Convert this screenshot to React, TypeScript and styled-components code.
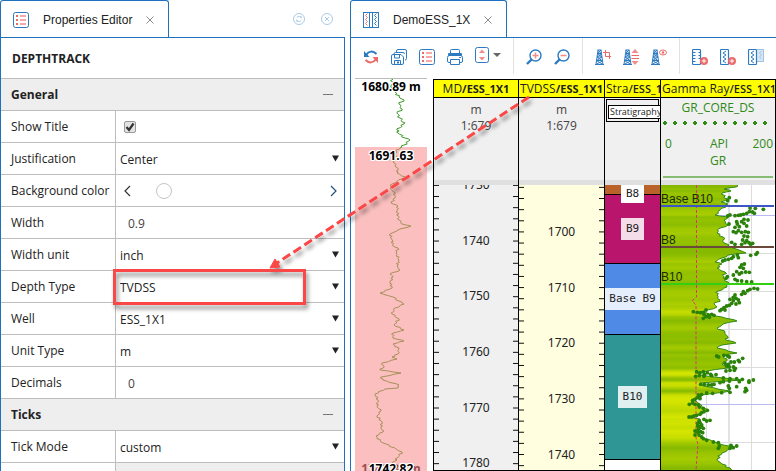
import React from "react";
import styled, { createGlobalStyle } from "styled-components";

const BLUE = "#1f70bd";
const ICON = "#2b7ac2";
const PINK = "#f08c8c";
const RED = "#fa4646";
const UI = '"Open Sans", "Noto Sans", sans-serif';
const ARIAL = '"Liberation Sans", Arial, sans-serif';

const GlobalStyle = createGlobalStyle`
  * { box-sizing: border-box; }
  body { margin: 0; background: #fff; color: #222; font: 12px/16px ${UI}; overflow: hidden; }
  button, input, select { font: inherit; color: inherit; }
  h1, h2 { margin: 0; }
`;

const Page = styled.div`
  position: relative;
  display: flex;
  gap: 5px;
  height: 100vh;
  overflow: hidden;
`;
const Panel = styled.section<{ $side?: boolean }>`
  display: flex;
  flex-direction: column;
  flex: ${(p) => (p.$side ? "0 0 345px" : "1 1 0")};
  min-width: 0;
`;
const TabBar = styled.header`
  display: flex;
  align-items: stretch;
  height: 38px;
  flex: none;
  border-bottom: 1px solid ${BLUE};
`;
const Tab = styled.div`
  display: flex;
  align-items: center;
  gap: 14px;
  padding: 2px 14px 0 12px;
  border: 1px solid ${BLUE};
  border-bottom: 0;
  border-radius: 3px 3px 0 0;
  white-space: nowrap;
`;
const TabLabel = styled.h1`
  font: 12px/16px ${ARIAL};
`;
const IconButton = styled.button<{ $w?: number }>`
  display: flex;
  align-items: center;
  justify-content: center;
  flex: none;
  width: ${(p) => p.$w ?? 28}px;
  padding: 0;
  border: 0;
  background: none;
  cursor: pointer;
`;
const TabTools = styled.div`
  display: flex;
  margin-left: auto;
  padding-right: 4px;
`;
const PanelBody = styled.div<{ $right?: boolean }>`
  flex: 1;
  min-height: 0;
  overflow: hidden;
  border-left: 1px solid ${BLUE};
  border-right: ${(p) => (p.$right ? `1px solid ${BLUE}` : "0")};
`;
const ObjectTitle = styled.h2`
  height: 41px;
  padding: 0 11px;
  font: 700 12px/41px ${UI};
  border-bottom: 1px solid #bdbdbd;
`;
const SectionHead = styled.div`
  display: flex;
  align-items: center;
  justify-content: space-between;
  height: 32px;
  padding: 0 4px 0 10px;
  background: #eee;
  border-bottom: 1px solid #bdbdbd;
`;
const SectionTitle = styled.h2`
  font: 700 12px/16px ${UI};
`;
const PropRow = styled.div`
  display: grid;
  grid-template-columns: 115px 1fr;
  height: 32px;
  border-bottom: 1px solid #bdbdbd;
`;
const PropLabel = styled.label`
  padding: 0 0 0 10px;
  line-height: 31px;
  border-right: 1px solid #bdbdbd;
  white-space: nowrap;
`;
const PropValue = styled.div<{ $muted?: boolean }>`
  display: grid;
  align-items: center;
  background: ${(p) => (p.$muted ? "#eee" : "#fff")};
  > * { grid-area: 1 / 1; }
`;
const Select = styled.select`
  appearance: none;
  width: 100%;
  height: 31px;
  padding: 2px 20px 0 4px;
  border: 0;
  background: transparent;
`;
const Caret = styled.svg`
  justify-self: end;
  margin-right: 5px;
  pointer-events: none;
`;
const NumberBox = styled.input`
  width: 100%;
  height: 31px;
  padding: 1px 12px 0 12px;
  border: 0;
  background: transparent;
  color: #444;
`;
const CheckFrame = styled.span`
  display: grid;
  width: 12px;
  height: 12px;
  margin-left: 8px;
  > * { grid-area: 1 / 1; }
  svg { pointer-events: none; }
`;
const CheckBox = styled.input`
  appearance: none;
  margin: 0;
  border: 1px solid #999;
  border-radius: 2px;
  background: #e3e3e3;
`;
const ColorPicker = styled.div`
  display: flex;
  align-items: center;
  padding: 0 4px 0 3px;
`;
const Swatch = styled.button`
  width: 16px;
  height: 16px;
  margin: 0 auto 0 21px;
  padding: 0;
  border: 1px solid #c4c4c4;
  border-radius: 50%;
  background: #fff;
`;

const Toolbar = styled.div`
  display: flex;
  height: 40px;
  padding: 0 6px 2px;
`;
const Separator = styled.span`
  flex: none;
  width: 1px;
  margin: 0 6px 2px;
  background: #e2e2e2;
`;
const LogView = styled.div`
  display: flex;
  gap: 6px;
  padding-left: 4px;
`;
const Overview = styled.div`
  position: relative;
  flex: none;
  width: 72px;
  height: 393px;
  border-top: 1px solid #bbb;
  overflow: hidden;
  svg { display: block; }
`;
const DepthMark = styled.span<{ $top: number; $faded?: boolean }>`
  position: absolute;
  top: ${(p) => p.$top}px;
  left: 0;
  right: 0;
  text-align: center;
  white-space: nowrap;
  font: 700 12px/16px "Noto Sans", sans-serif;
  color: ${(p) => (p.$faded ? "#9b5050" : "#000")};
  text-shadow: ${(p) =>
    p.$faded
      ? "none"
      : "1px 0 #fff, -1px 0 #fff, 0 1px #fff, 0 -1px #fff, 1px 1px #fff, -1px -1px #fff, 1px -1px #fff, -1px 1px #fff"};
`;
const Tracks = styled.div`
  display: grid;
  grid-template-columns: 84px 86px 56px minmax(0, 1fr);
  flex: 1;
  min-width: 0;
  margin-top: 1px;
  border: 1px solid #000;
`;
const Track = styled.div`
  display: flex;
  flex-direction: column;
  min-width: 0;
  overflow: hidden;
  & + & { border-left: 1px solid #000; }
`;
const TrackTitle = styled.div<{ $left?: boolean }>`
  height: 18px;
  padding: 0 1px;
  border-bottom: 1px solid #000;
  background: #ff0;
  font: 12px/17px ${UI};
  text-align: ${(p) => (p.$left ? "left" : "center")};
  white-space: nowrap;
  overflow: hidden;
`;
const Bold = styled.b<{ $light?: boolean }>`
  font-weight: ${(p) => (p.$light ? 600 : 700)};
  font-size: 11px;
`;
const TrackHead = styled.div`
  height: 87px;
  background: #f0f0f0;
  border-bottom: 5px solid #e0e0e0;
  overflow: hidden;
`;
const ScaleInfo = styled.div`
  padding-top: 4px;
  text-align: center;
  line-height: 16px;
  color: #444;
`;
const TrackBody = styled.div<{ $bg: string }>`
  position: relative;
  height: 285px;
  background: ${(p) => p.$bg};
  overflow: hidden;
  > svg { display: block; }
`;
const StratBox = styled.div`
  width: 53px;
  height: 23px;
  margin: 1px 0 0 1px;
  padding: 5px 0 0 1px;
  border: 1px solid #000;
`;
const StratName = styled.div`
  width: 60px;
  height: 14px;
  padding-left: 1px;
  border: 1px solid #000;
  background: #fff;
  font: 9px/12px ${UI};
`;
const CurveHead = styled.div`
  padding: 1px 2px;
  text-align: center;
  color: #2f8a16;
  line-height: 17px;
`;
const CurveRange = styled.div`
  display: grid;
  grid-template-columns: 1fr 1fr 1fr;
  padding: 10px 0 0 2px;
  span:first-child { text-align: left; }
  span:last-child { text-align: right; }
`;
const DotRule = styled.div`
  height: 4px;
  margin-top: 5px;
  background: radial-gradient(circle at 2px 2px, #2f8a16 0 1px, #2f8a16 2px, transparent 2px) 0 0 / 10px 4px repeat-x;
`;
const SolidRule = styled.div`
  height: 2px;
  margin-top: 7px;
  background: #86bd72;
`;
const Layer = styled.div<{ $h: number; $color: string }>`
  display: flex;
  align-items: center;
  justify-content: center;
  height: ${(p) => p.$h}px;
  background: ${(p) => p.$color};
  & + & { border-top: 1px solid #000; }
`;
const LayerName = styled.span<{ $wide?: boolean; $top?: boolean }>`
  position: relative;
  z-index: 1;
  width: ${(p) => (p.$wide ? "100%" : "auto")};
  align-self: ${(p) => (p.$top ? "flex-start" : "center")};
  flex: none;
  padding: ${(p) => (p.$top ? 1 : 3)}px ${(p) => (p.$wide ? 0 : 5)}px;
  background: ${(p) => (p.$top ? "#fff" : "rgba(255, 255, 255, 0.85)")};
  font: 11px/16px "DejaVu Sans Mono", monospace;
  text-align: center;
  white-space: nowrap;
`;
const Marker = styled.div<{ $top: number; $color: string }>`
  position: absolute;
  top: ${(p) => p.$top}px;
  left: 0;
  right: 1px;
  height: 15px;
  border-bottom: 2px solid ${(p) => p.$color};
  font: 12px/14px ${ARIAL};
  color: #1c2b00;
`;
const Annotation = styled.svg`
  position: absolute;
  left: 0;
  top: 0;
  pointer-events: none;
`;

/* ---------- icons ---------- */

const ListIcon = () => (
  <svg width="16" height="16" viewBox="0 0 16 16">
    <rect x="0.5" y="0.5" width="15" height="15" rx="2" fill="#fff" stroke={ICON} />
    <path d="M3 4h2M3 8h2M3 12h2" stroke="#ec6a6a" strokeWidth="2" />
    <path d="M7 4h6M7 8h6M7 12h6" stroke="#f5aaaa" strokeWidth="2" />
  </svg>
);
const CloseIcon = () => (
  <svg width="8" height="8" viewBox="0 0 8 8">
    <path d="M0.5 0.5l7 7M7.5 0.5l-7 7" stroke="#8a8a8a" fill="none" />
  </svg>
);
const LogIcon = () => (
  <svg width="16" height="16" viewBox="0 0 16 16" fill="none">
    <rect x="0.5" y="0.5" width="15" height="15" stroke={ICON} />
    <path d="M6.5 0v16M9.5 0v16" stroke={ICON} />
    <path d="M4.500 1.500l-2 2 2 2-2 2 2 2-2 2 2 2" stroke="#ee7777" />
    <path d="M13.500 1.500l-2 2 2 2-2 2 2 2-2 2 2 2" stroke={ICON} />
  </svg>
);
const ReloadTabIcon = () => (
  <svg width="12" height="12" viewBox="0 0 12 12" fill="none" stroke="#a9cbe9">
    <circle cx="6" cy="6" r="5.500" />
    <path d="M3.500 6.500a2.500 2.500 0 0 0 4.500 1M8.500 5.500a2.500 2.500 0 0 0-4.500-1M8 3v2M4 7v2" />
  </svg>
);
const CloseTabIcon = () => (
  <svg width="12" height="12" viewBox="0 0 12 12" fill="none" stroke="#a9cbe9">
    <circle cx="6" cy="6" r="5.500" />
    <path d="M4 4l4 4M8 4l-4 4" />
  </svg>
);
const RefreshIcon = () => (
  <svg width="16" height="16" viewBox="0 0 16 16" fill="none">
    <path d="M3.500 5.500C5.500 2 10 1.500 13.500 5" stroke={ICON} strokeWidth="2" />
    <path d="M1 2v6h5.500z" fill={ICON} />
    <path d="M12.500 10.500C10.500 14 6 14.500 2.500 11" stroke="#ec6a6a" strokeWidth="2" />
    <path d="M15 14V8H9.500z" fill="#ec6a6a" />
  </svg>
);
const SaveAllIcon = () => (
  <svg width="16" height="16" viewBox="0 0 16 16" fill="none" stroke={ICON}>
    <path d="M5.500 3V2a1.500 1.500 0 0 1 1.500-1.500h7A1.500 1.500 0 0 1 15.500 2v7.500a1.500 1.500 0 0 1-1.500 1.500M3 5.500V5a1.500 1.500 0 0 1 1.500-1.500h7.500A1.500 1.500 0 0 1 13.500 5" />
    <path d="M0.500 7A1.500 1.500 0 0 1 2 5.500h8l2.500 2.500v6A1.500 1.500 0 0 1 11 15.500H2A1.500 1.500 0 0 1 0.500 14z" fill="#fff" />
    <path d="M3.500 6v3h5V6M3.500 15v-3.500h6V15" />
    <path d="M6 12.500h2v2H6z" fill={ICON} stroke="none" />
  </svg>
);
const PrintIcon = () => (
  <svg width="16" height="16" viewBox="0 0 16 16" fill="none" stroke={ICON}>
    <path d="M3.500 4V1.500a1 1 0 0 1 1-1h7a1 1 0 0 1 1 1V4" />
    <rect x="1" y="4" width="14" height="3" rx="1" fill={ICON} stroke="none" />
    <path d="M3.500 13.500H2A1.500 1.500 0 0 1 .5 12V8.500A2 2 0 0 1 2.500 6.500h11a2 2 0 0 1 2 2V12a1.500 1.500 0 0 1-1.500 1.500h-1.500" />
    <path d="M3.500 10.500h9v5h-9z" fill="#fff" />
    <path d="M12 8.500h2" />
  </svg>
);
const FitIcon = () => (
  <svg width="26" height="20" viewBox="0 0 26 20">
    <rect x="0.500" y="0.500" width="13" height="15" rx="2" fill="#fff" stroke={ICON} />
    <path d="M7 2.500L10 6H4zM7 13.500L10 10H4z" fill={PINK} />
    <path d="M18 6h8l-4 4z" fill="#666" />
  </svg>
);
const MagnifierIcon = ({ plus }: { plus?: boolean }) => (
  <svg width="16" height="16" viewBox="0 0 16 16" fill="none">
    <circle cx="9.500" cy="6.500" r="5.500" stroke={ICON} strokeWidth="1.400" />
    <path d="M5.500 10.500L1 15" stroke={ICON} strokeWidth="2.400" />
    <path d={plus ? "M6.500 6.500h6M9.500 3.500v6" : "M6.500 6.500h6"} stroke={PINK} strokeWidth="1.500" />
  </svg>
);
const DerrickIcon = ({ kind }: { kind: "crop" | "range" | "eye" }) => (
  <svg width="16" height="16" viewBox="0 0 16 16" fill="none">
    <path d="M2.500 1h4M3 1L1 15.500M6 1l2 14.500M2.500 4.500h4M2 8h5M1.500 11.500h6M0 15.500h9" stroke={ICON} />
    <path d="M3 1l3.500 4L2 8l5.500 4-6.500 3.500M6 1L2.500 4.500 7 8l-5.500 3.500L8 15.500" stroke={ICON} />
    {kind === "crop" && <path d="M10.500 1v6.500H16M8 3.500h6.500V10" stroke="#e86a6a" />}
    {kind === "range" && (
      <>
        <path d="M12 0l3.500 4h-7zM12 16l3.500-4h-7z" fill={PINK} />
        <path d="M8.500 6.500H16M8.500 9.500H16" stroke="#e86a6a" />
      </>
    )}
    {kind === "eye" && (
      <>
        <ellipse cx="12" cy="3.500" rx="3.500" ry="2.500" stroke="#e86a6a" />
        <circle cx="12" cy="3.500" r="1.200" fill="#e86a6a" />
      </>
    )}
  </svg>
);
const AddTrackIcon = ({ wave }: { wave?: boolean }) => (
  <svg width="16" height="16" viewBox="0 0 16 16" fill="none">
    <rect x="0.500" y="0.500" width="8" height="15" rx="1" stroke={ICON} strokeWidth="1.200" />
    {wave ? (
      <path d="M6 2L3 4l3 2-3 2 3 2-3 2 3 2" stroke={ICON} />
    ) : (
      <path d="M1 3.500h2.500M1 6.500h2.500M1 9.500h2.500M1 12.500h2.500M6.500 3.500H8M6.500 6.500H8M6.500 9.500H8" stroke={ICON} />
    )}
    <circle cx="12" cy="12" r="4" fill="#ec6a6a" />
    <path d="M9.800 12h4.400M12 9.800v4.400" stroke="#fff" />
  </svg>
);
const CopyTrackIcon = () => (
  <svg width="16" height="16" viewBox="0 0 16 16" fill="none">
    <path d="M9 0h7v13H9z" fill="#dbe8f4" />
    <path d="M9 .5h6.500v12H9M13.500 2l-2 2 2 2-2 2 2 2" stroke="#9fc2e2" />
    <rect x="0.500" y="0.500" width="8" height="15" rx="1" fill="#fff" stroke={ICON} strokeWidth="1.200" />
    <path d="M6 2L3 4l3 2-3 2 3 2-3 2 3 2" stroke={ICON} />
  </svg>
);
const Chevron = ({ d, color }: { d: string; color: string }) => (
  <svg width="7" height="12" viewBox="0 0 7 12" fill="none">
    <path d={d} stroke={color} strokeWidth="1.200" />
  </svg>
);

/* ---------- log data ---------- */

type Pt = [number, number];

/* Deterministic small-scale roughness between the key samples of a curve. */
const roughen = (pts: Pt[], amp: number, step: number): Pt[] => {
  const out: Pt[] = [];
  let n = 0;
  pts.forEach((p, i) => {
    out.push(p);
    const q = pts[i + 1];
    if (!q) return;
    const count = Math.floor((q[1] - p[1]) / step);
    for (let k = 1; k <= count; k++) {
      const t = k / (count + 1);
      n += 1;
      out.push([p[0] + (q[0] - p[0]) * t + Math.sin(n * 2.4) * amp, p[1] + (q[1] - p[1]) * t]);
    }
  });
  return out;
};
const toPath = (pts: Pt[]) => "M" + pts.map(([x, y]) => `${x.toFixed(1)} ${y.toFixed(1)}`).join("L");
const pairs = (s: string): Pt[] => s.trim().split(/\s+/).map((p) => p.split(",").map(Number) as Pt);

const overviewTop = pairs(
  "391,78 393,82 391,86 395,92 399,97 404,100 399,104 402,109 397,113 400,118 404,124 397,130 398,133 405,138 410,140 404,145 400,148"
);
const overviewBottom = pairs(
  "400,148 396,151 394,163 398,170 397,173 405,177 392,184 390,188 394,192 395,198 391,203 398,206 397,211 399,220 402,224 411,226 398,230 390,234 392,240 393,246 398,248 396,253 399,260 397,266 400,270 390,274 393,277 390,282 392,288 380,293 393,297 399,301 404,304 395,308 392,314 399,319 394,325 404,330 393,333 393,338 404,341 393,344 399,349 398,354 392,357 397,359 382,363 384,367 380,370 401,373 381,377 383,380 399,385 398,388 385,389 375,394 378,400 377,406 381,411 377,416 382,422 381,427 383,432 376,436 380,441 402,452 397,458 395,461 392,463"
);
const gamma = pairs(
  "737,185 736,187 724,189 731,191 722,193 724,197 728,199 721,202 728,204 720,210 715,215 728,217 724,220 728,225 720,228 717,233 723,237 724,243 733,248 746,253 728,255 722,258 715,262 722,264 717,268 725,272 723,278 728,282 727,287 718,291 717,295 720,300 714,304 717,307 703,312 710,315 722,317 737,321 723,324 717,328 725,332 728,337 725,339 736,343 722,345 717,348 737,353 722,355 727,359 722,364 728,368 707,371 697,373 700,375 723,378 742,380 700,383 703,386 730,391 717,393 702,395 693,399 698,403 702,406 707,411 692,417 700,419 698,424 703,428 695,431 703,438 718,443 733,448 722,453 717,459 722,464 730,468 730,471"
);

/* Core samples, on a grid three times finer than the track. */
const coreUpper = pairs(
  "388,-7 383,2 408,3 490,28 466,25 450,24 448,35 458,36 463,40 440,40 430,43 422,45 415,46 405,47 390,45 383,48 432,58 444,60 425,65 410,65 387,72 412,72 432,70 405,82 418,80 440,78 400,95 408,98 415,92 425,97 436,95 445,97 432,108 443,110 428,120 440,122 435,128 447,128 458,130 452,133 425,133 405,133 395,127 472,158 468,163 452,166 412,165 400,170 415,173 395,175 385,178 375,180 368,183 433,192 425,195 420,202 430,205 410,215 425,218 437,216 448,217 418,222 400,225 382,230 378,235 405,238 412,242 425,243 440,245 455,246 473,267 462,265 450,268 443,272 430,275 435,280 425,283 405,285 400,292 408,295 415,300 400,302 390,298 395,310 408,312 418,308 380,318 388,316 372,323 365,328 360,332 375,330 280,335 292,337 302,338 310,337 318,330 312,343 325,345 335,343 342,346 318,350 328,352 310,355"
).map(([x, y]): Pt => [600 + x / 3, 200 + y / 3]);
const coreLower = pairs(
  "350,75 356,78 372,73 383,75 388,78 428,82 415,88 418,92 393,93 403,93 375,97 385,100 380,105 388,108 400,108 406,112 403,118 378,120 390,118 290,122 300,125 310,122 322,125 313,130 332,130 348,131 287,136 298,134 312,136 335,134 370,141 390,143 388,150 410,143 427,145 447,150 460,147 447,154 418,152 370,152 360,155 302,160 313,160 325,162 335,162 342,160 385,165 410,167 437,172 440,178 435,182 388,172 390,184 365,185 338,187 320,186 305,190 300,195 295,192 292,200 300,203 285,205 278,208 278,216 268,220 285,220 295,222 298,228 310,232 322,238 312,242 305,245 300,250 290,253 282,255 275,258 267,258 312,265 320,270 330,268 297,270 293,278 300,275 305,282 293,285 300,288 310,292 295,295 285,300 293,303 302,302 308,305 285,312 297,312 305,318 310,323 320,328 340,333 355,335 358,345 355,352 393,343 410,345 400,350 390,352"
).map(([x, y]): Pt => [600 + x / 3, 331 + y / 3]);
const core = [...coreUpper, ...coreLower];

const shadeAt = (x: number) => {
  const t = Math.max(0, Math.min(1, (x - 696) / 34));
  const mix = (a: number, b: number) => Math.round(a + (b - a) * t);
  return `rgb(${mix(214, 134)},${mix(230, 186)},0)`;
};
const gammaCurve = roughen(gamma, 2, 2);

const DepthScale = ({ width, first, labels, start }: { width: number; first: number; labels: number[]; start: number }) => (
  <svg width={width} height="285" viewBox={`0 0 ${width} 285`}>
    {Array.from({ length: 26 }, (_, i) => {
      const y = first + i * 11.13;
      return <path key={i} d={`M0 ${y}h5M${width - 5} ${y}h5`} stroke="#111" />;
    })}
    {labels.map((v, i) => (
      <text key={v} x={width / 2} y={start + i * 55.65 + 5} textAnchor="middle" fontFamily="Noto Sans, sans-serif" fontSize="12" fill="#222">
        {v}
      </text>
    ))}
  </svg>
);

const GammaChart = () => (
  <svg width="114" height="285" viewBox="661 185 114 285">
    <defs>
      <linearGradient id="shade" gradientUnits="userSpaceOnUse" x1="0" y1="185" x2="0" y2="470">
        {gamma.map(([x, y], i) => (
          <stop key={i} offset={(y - 185) / 285} stopColor={shadeAt(x)} />
        ))}
      </linearGradient>
    </defs>
    <path d="M706.500 185v285M751.500 185v285M661 253.500h114M661 291.500h114M661 329.500h114M661 367.500h114M661 442.500h114" stroke="#dcdcdc" />
    <path d="M729 185v285" stroke="#e2e2e2" strokeWidth="2" />
    <path d="M661 215.500h114M661 404.500h114" stroke="#b9b9f5" />
    <path d={toPath(gammaCurve) + "L661 471L661 185Z"} fill="url(#shade)" />
    <path d={toPath(gammaCurve)} fill="none" stroke="#2f8a16" />
    <path d="M696.500 185V297L692 301L696 305V438L698 444L696 470" fill="none" stroke="#e0307a" strokeDasharray="3 2" />
    {core.map(([x, y], i) => (
      <circle key={i} cx={x} cy={y} r="1.900" fill="#2a8208" />
    ))}
  </svg>
);

/* ---------- property rows ---------- */

const SelectRow = ({ label, value }: { label: string; value: string }) => {
  const id = label.replace(/\s/g, "-");
  return (
    <PropRow>
      <PropLabel htmlFor={id}>{label}</PropLabel>
      <PropValue>
        <Select id={id} defaultValue={value}>
          <option>{value}</option>
        </Select>
        <Caret width="7" height="7" viewBox="0 0 7 7">
          <path d="M0 0.500h7l-3.500 6z" fill="#222" />
        </Caret>
      </PropValue>
    </PropRow>
  );
};
const NumberRow = ({ label, value }: { label: string; value: string }) => (
  <PropRow>
    <PropLabel htmlFor={label}>{label}</PropLabel>
    <PropValue>
      <NumberBox id={label} defaultValue={value} />
    </PropValue>
  </PropRow>
);
const Section = ({ title }: { title: string }) => (
  <SectionHead>
    <SectionTitle>{title}</SectionTitle>
    <IconButton $w={24} aria-label={`Collapse ${title}`}>
      <svg width="10" height="1">
        <path d="M0 0.500h10" stroke="#777" />
      </svg>
    </IconButton>
  </SectionHead>
);

const PropertiesPanel = () => (
  <Panel $side>
    <TabBar>
      <Tab>
        <ListIcon />
        <TabLabel>Properties Editor</TabLabel>
        <IconButton $w={8} aria-label="Close Properties Editor">
          <CloseIcon />
        </IconButton>
      </Tab>
      <TabTools>
        <IconButton aria-label="Reload panel"><ReloadTabIcon /></IconButton>
        <IconButton aria-label="Close panel"><CloseTabIcon /></IconButton>
      </TabTools>
    </TabBar>
    <PanelBody $right>
      <ObjectTitle>DEPTHTRACK</ObjectTitle>
      <Section title="General" />
      <PropRow>
        <PropLabel htmlFor="show-title">Show Title</PropLabel>
        <PropValue>
          <CheckFrame>
            <CheckBox id="show-title" type="checkbox" defaultChecked />
            <svg width="12" height="12" viewBox="0 0 12 12" fill="none">
              <path d="M2.500 6l2.500 3 4.500-6.500" stroke="#333" strokeWidth="2.200" />
            </svg>
          </CheckFrame>
        </PropValue>
      </PropRow>
      <SelectRow label="Justification" value="Center" />
      <PropRow>
        <PropLabel htmlFor="background">Background color</PropLabel>
        <ColorPicker>
          <IconButton $w={16} aria-label="Previous color"><Chevron d="M6 1L1 6l5 5" color="#333" /></IconButton>
          <Swatch id="background" />
          <IconButton $w={14} aria-label="Next color"><Chevron d="M1 1l5 5-5 5" color="#24507c" /></IconButton>
        </ColorPicker>
      </PropRow>
      <NumberRow label="Width" value="0.9" />
      <SelectRow label="Width unit" value="inch" />
      <SelectRow label="Depth Type" value="TVDSS" />
      <SelectRow label="Well" value="ESS_1X1" />
      <SelectRow label="Unit Type" value="m" />
      <NumberRow label="Decimals" value="0" />
      <Section title="Ticks" />
      <SelectRow label="Tick Mode" value="custom" />
      <PropRow>
        <PropLabel as="span" />
        <PropValue $muted />
      </PropRow>
    </PanelBody>
  </Panel>
);

const LogPanel = () => (
  <Panel>
    <TabBar>
      <Tab>
        <LogIcon />
        <TabLabel>DemoESS_1X</TabLabel>
        <IconButton $w={8} aria-label="Close DemoESS_1X">
          <CloseIcon />
        </IconButton>
      </Tab>
    </TabBar>
    <PanelBody>
      <Toolbar>
        <IconButton aria-label="Refresh"><RefreshIcon /></IconButton>
        <IconButton aria-label="Save all"><SaveAllIcon /></IconButton>
        <IconButton aria-label="Properties"><ListIcon /></IconButton>
        <IconButton aria-label="Print"><PrintIcon /></IconButton>
        <IconButton $w={38} aria-label="Fit height"><FitIcon /></IconButton>
        <Separator />
        <IconButton aria-label="Zoom in"><MagnifierIcon plus /></IconButton>
        <IconButton aria-label="Zoom out"><MagnifierIcon /></IconButton>
        <Separator />
        <IconButton aria-label="Crop well"><DerrickIcon kind="crop" /></IconButton>
        <IconButton aria-label="Well range"><DerrickIcon kind="range" /></IconButton>
        <IconButton aria-label="Show well"><DerrickIcon kind="eye" /></IconButton>
        <Separator />
        <IconButton aria-label="Add depth track"><AddTrackIcon /></IconButton>
        <IconButton aria-label="Add curve track"><AddTrackIcon wave /></IconButton>
        <IconButton aria-label="Copy track"><CopyTrackIcon /></IconButton>
      </Toolbar>
      <LogView>
        <Overview>
          <svg width="72" height="392" viewBox="355 79 72 392" fill="none">
            <rect x="355" y="147" width="72" height="324" fill="#fbbfbf" />
            <path d={toPath(roughen(overviewTop, 1.8, 1.5))} stroke="#3c9a28" />
            <path d={toPath(roughen(overviewBottom, 1.4, 1.5))} stroke="#a8905a" />
          </svg>
          <DepthMark $top={0}>1680.89 m</DepthMark>
          <DepthMark $top={69}>1691.63</DepthMark>
          <DepthMark $top={382} $faded>1742.82 m</DepthMark>
          <DepthMark $top={382}>1742.82</DepthMark>
        </Overview>
        <Tracks>
          <Track>
            <TrackTitle>MD<Bold>/ESS_1X1</Bold></TrackTitle>
            <TrackHead><ScaleInfo>m<br />1:679</ScaleInfo></TrackHead>
            <TrackBody $bg="#f0f0f0">
              <DepthScale width={84} first={0.4} start={-1} labels={[1730, 1740, 1750, 1760, 1770, 1780]} />
            </TrackBody>
          </Track>
          <Track>
            <TrackTitle>TVDSS<Bold>/ESS_1X1</Bold></TrackTitle>
            <TrackHead><ScaleInfo>m<br />1:679</ScaleInfo></TrackHead>
            <TrackBody $bg="#ffffe0">
              <DepthScale width={85} first={2.4} start={46} labels={[1700, 1710, 1720, 1730, 1740]} />
            </TrackBody>
          </Track>
          <Track>
            <TrackTitle $left>Stra<Bold $light>/ESS_1X1</Bold></TrackTitle>
            <TrackHead>
              <StratBox><StratName>Stratigraphy</StratName></StratBox>
            </TrackHead>
            <TrackBody $bg="#fff">
              <Layer $h={9} $color="#b9622a"><LayerName $top>B8</LayerName></Layer>
              <Layer $h={69} $color="#b9156c"><LayerName>B9</LayerName></Layer>
              <Layer $h={71} $color="#4f8be6"><LayerName $wide>Base B9</LayerName></Layer>
              <Layer $h={125} $color="#2f9695"><LayerName>B10</LayerName></Layer>
              <Layer $h={11} $color="#fff" />
            </TrackBody>
          </Track>
          <Track>
            <TrackTitle>Gamma Ray<Bold $light>/ESS_1X1</Bold></TrackTitle>
            <TrackHead>
              <CurveHead>
                GR_CORE_DS
                <DotRule />
                <CurveRange><span>0</span><span>API</span><span>200</span></CurveRange>
                GR
                <SolidRule />
              </CurveHead>
            </TrackHead>
            <TrackBody $bg="#fff">
              <GammaChart />
              <Marker $top={7} $color="#3e56c4">Base B10</Marker>
              <Marker $top={48} $color="#6b4a3a">B8</Marker>
              <Marker $top={85} $color="#34cf10">B10</Marker>
            </TrackBody>
          </Track>
        </Tracks>
      </LogView>
    </PanelBody>
  </Panel>
);

export default function App() {
  return (
    <Page>
      <GlobalStyle />
      <PropertiesPanel />
      <LogPanel />
      <Annotation width="560" height="320" viewBox="0 0 560 320" fill="none">
        <defs>
          <filter id="lift" filterUnits="userSpaceOnUse" x="0" y="0" width="560" height="320">
            <feDropShadow dx="2" dy="4" stdDeviation="2" floodColor="#000" floodOpacity="0.45" />
          </filter>
        </defs>
        <g filter="url(#lift)">
          <path d="M529 97L277 263" stroke={RED} strokeWidth="3" strokeDasharray="9 4" />
          <path d="M270 268l5-9 5 8z" fill={RED} stroke={RED} />
          <rect x="114.500" y="270.500" width="190" height="33" stroke={RED} strokeWidth="3" />
        </g>
      </Annotation>
    </Page>
  );
}
